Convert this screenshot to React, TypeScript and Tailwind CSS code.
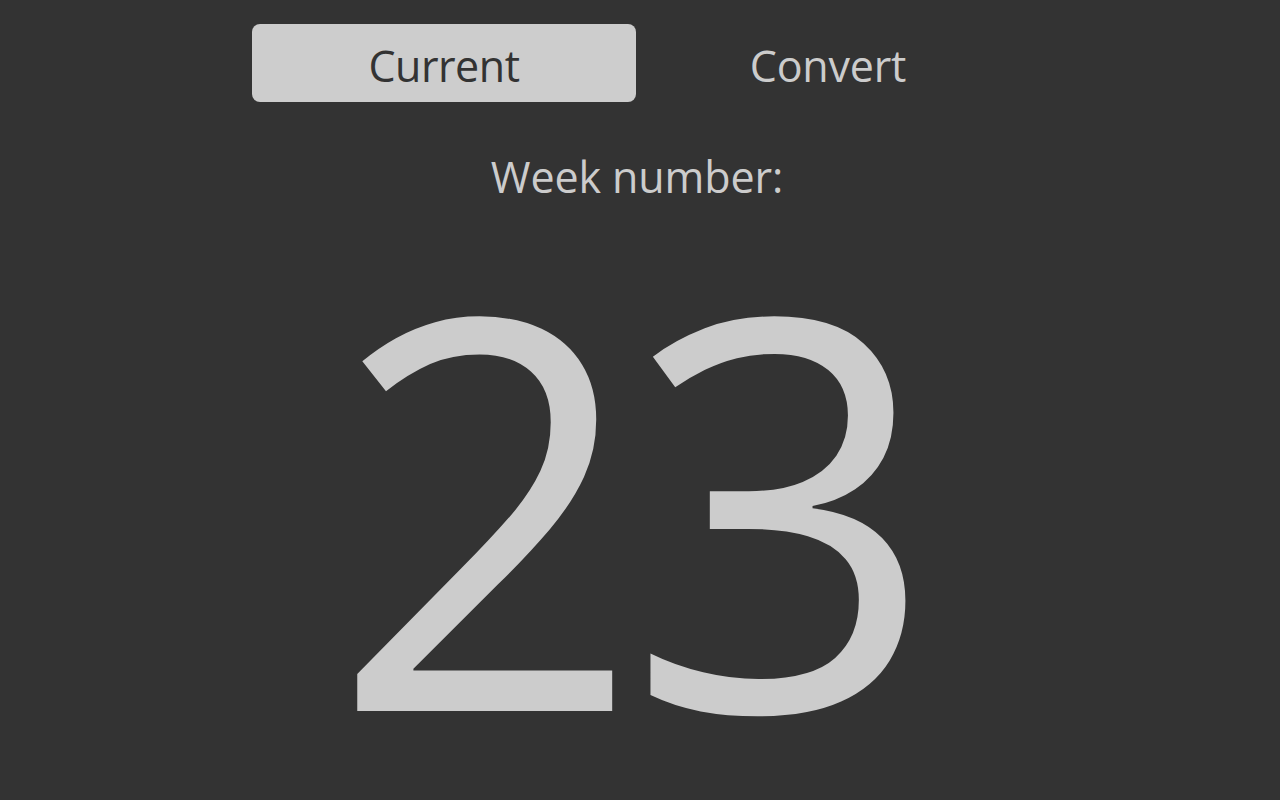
import { useState } from "react";

const tabs = ["Current", "Convert"] as const;

export default function App() {
  const [tab, setTab] = useState<(typeof tabs)[number]>("Current");

  return (
    <div
      className="flex h-[800px] w-full flex-col items-center overflow-hidden bg-[#333333] text-[#cccccc]"
      style={{ fontFamily: '"Open Sans", "Noto Sans", sans-serif' }}
    >
      {/* Tabs */}
      <div className="mt-6 mr-2 flex">
        {tabs.map((t) => (
          <button
            key={t}
            onClick={() => setTab(t)}
            className={
              t === tab
                ? "flex h-[78px] w-[384px] items-center justify-center rounded-lg bg-[#cdcdcd] pt-[4px] text-[43px] leading-none tracking-[-0.5px] text-[#333333]"
                : "flex h-[78px] w-[384px] items-center justify-center rounded-lg pt-[4px] text-[43px] leading-none tracking-[-0.2px] text-[#cccccc]"
            }
          >
            {t}
          </button>
        ))}
      </div>

      <p className="mt-[53px] mr-[6px] text-[43px] leading-none tracking-[-0.1px]">Week number:</p>

      <p className="mt-[92px] mr-[28px] text-[545px] leading-[420px] tracking-[-16px]">23</p>
    </div>
  );
}
